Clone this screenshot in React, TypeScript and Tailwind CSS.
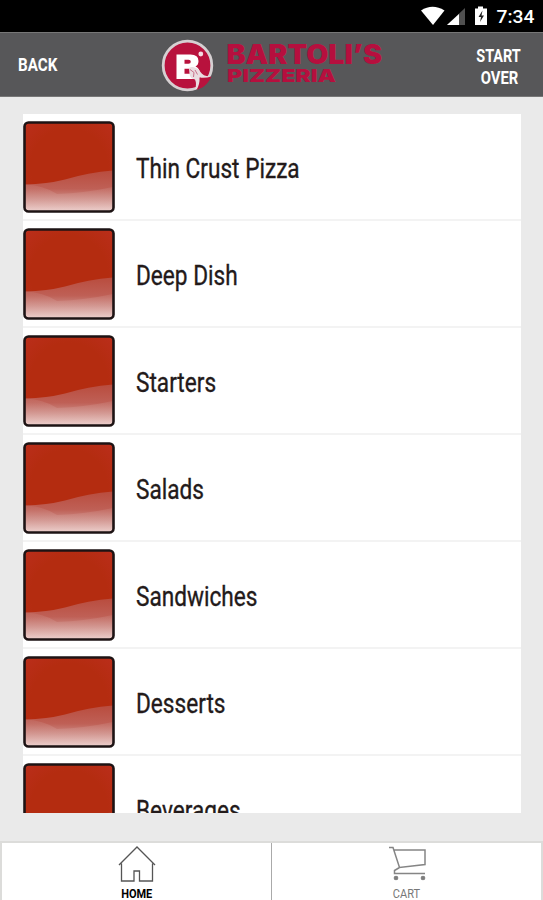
import React from 'react';

const categories = [
  'Thin Crust Pizza',
  'Deep Dish',
  'Starters',
  'Salads',
  'Sandwiches',
  'Desserts',
  'Beverages',
];

const StatusBar: React.FC = () => (
  <div className="flex h-8 shrink-0 items-center justify-end bg-black pr-[9px] text-white">
    <svg width="70" height="32" viewBox="0 0 70 32">
      <path d="M0 10.500Q11.500 3 23.500 10.500L12 25Z" fill="#fff" />
      <path d="M44 8V25H26Z" fill="#505050" />
      <path d="M38 14V25H26Z" fill="#fff" />
      <path d="M57 6.500h5v2h4V25H54V8.500h3Z" fill="#fff" />
      <path d="M61.500 10.500l-4 6.500h2.500l-1 5 4-6.500h-2.500Z" fill="#222" />
    </svg>
    <span className="ml-[7px] mt-px inline-block origin-right scale-x-[1.04] text-[18.500px] font-medium leading-8">7:34</span>
  </div>
);

const Logo: React.FC = () => (
  <svg width="224" height="56" viewBox="160 36 224 56" className="shrink-0">
    <circle cx="187.500" cy="64.500" r="24.300" fill="#b8123d" stroke="#d6d0d2" strokeWidth="2.800" />
    <path
      fillRule="evenodd"
      d="M176.500 53.500H190.500Q198.500 53.500 198.500 60Q198.500 64 195.500 65.500Q199.500 67 200 72Q198 78 192 78H176.500ZM184.500 58.800V62.800H188.500Q190.800 62.800 190.800 60.800Q190.800 58.800 188.500 58.800ZM184.500 67.800V72.800H189Q192 72.800 192 70.200Q192 67.800 189 67.800Z"
      fill="#fff"
    />
    <path d="M189 67Q192 65 196 67Q199 68 200.500 71Q203 75 209.500 75.500L207 78.500Q203 79 200 76.500Q201 84 198 87.500L195 88.500Q197 83 195 78.500Q190 77.500 189.500 73Z" fill="#eadde1" />
    <path d="M199.500 76.500Q205 77.500 211.500 75.500Q210 79 207 82.500Q203 87 196.500 89Q200 83 199.500 76.500Z" fill="#b8123d" />
    <path d="M190 68.500L194 71.500L193.500 76M195 69L197.500 73.500" fill="none" stroke="#c9718a" strokeWidth="1" />
    <circle cx="200.800" cy="53" r="2.400" fill="#f3dce3" />
    <text x="226.500" y="63.300" textLength="155.500" lengthAdjust="spacingAndGlyphs" fill="#b60f3e" className="font-['Inter'] text-[26.500px] font-black">
      BARTOLI’S
    </text>
    <text x="227" y="81" textLength="109" lengthAdjust="spacingAndGlyphs" fill="#b60f3e" className="font-['Inter'] text-[18px] font-black">
      PIZZERIA
    </text>
  </svg>
);

const Header: React.FC = () => (
  <header className="flex h-[65px] shrink-0 items-center border-t border-b border-t-[#777] border-b-[#777] bg-[#575759] text-[18.500px] font-bold text-white">
    <div className="w-[160px] shrink-0 pl-[18px] pt-[2px]">
      <span className="inline-block origin-left scale-x-[0.82]">BACK</span>
    </div>
    <Logo />
    <div className="flex flex-1 flex-col items-center pl-[71px] pt-[4px] leading-[22px]">
      <span className="scale-x-[0.78]">START</span>
      <span className="scale-x-[0.8]">OVER</span>
    </div>
  </header>
);

const Tile: React.FC = () => (
  <svg width="92" height="92" viewBox="0 0 92 92" className="shrink-0">
    <defs>
      <linearGradient id="shine" x1="0" y1="0" x2="0" y2="1">
        <stop offset="0" stopColor="#b94c3e" />
        <stop offset="0.450" stopColor="#bf6056" />
        <stop offset="0.700" stopColor="#cc8c86" />
        <stop offset="1" stopColor="#e9cbc8" />
      </linearGradient>
      <linearGradient id="glow" x1="0" y1="0" x2="0" y2="1">
        <stop offset="0" stopColor="#c4726a" />
        <stop offset="1" stopColor="#efd2cf" />
      </linearGradient>
      <radialGradient id="base" r="0.720">
        <stop offset="0.600" stopColor="#b42c10" />
        <stop offset="1" stopColor="#bb2e1c" />
      </radialGradient>
    </defs>
    <rect x="1.500" y="1.500" width="89" height="89" rx="4" fill="url(#base)" />
    <path d="M2 63.500Q24 63 42 58.500Q65 51.500 90 49.500V90H2Z" fill="url(#shine)" />
    <path d="M2 63.500Q20 64 34 73Q62 72 90 66V90H2Z" fill="url(#glow)" opacity="0.450" />
    <rect x="1.500" y="1.500" width="89" height="89" rx="4" fill="none" stroke="#1d1314" strokeWidth="2.600" />
  </svg>
);

const NavItem: React.FC<{ label: string; active?: boolean; children: React.ReactNode }> = ({
  label,
  active,
  children,
}) => (
  <div className="flex flex-1 flex-col items-center pt-[2px]">
    {children}
    <span
      className={
        active
          ? 'mt-[4px] scale-x-[0.88] text-[12.500px] font-bold leading-[16px] text-black'
          : 'mt-[4px] scale-x-[0.88] text-[12.500px] leading-[16px] text-[#777]'
      }
    >
      {label}
    </span>
  </div>
);

export default function App() {
  return (
    <div className="flex h-[900px] w-[543px] flex-col overflow-hidden bg-[#eaeaea] font-['Roboto',sans-serif]">
      <StatusBar />
      <Header />
      <main className="ml-[23px] mr-[22px] mt-[17px] h-[699px] shrink-0 overflow-hidden bg-white">
        <ul>
          {categories.map((name) => (
            <li key={name} className="flex h-[107px] items-start border-b-2 border-[#f3f3f3] pt-[6.500px]">
              <Tile />
              <span className="ml-[21px] mt-[2px] origin-left scale-x-[0.838] whitespace-nowrap text-[27px] leading-[92px] text-[#231a1a] [-webkit-text-stroke:0.35px_#231a1a]">
                {name}
              </span>
            </li>
          ))}
        </ul>
      </main>
      <nav className="mt-auto flex h-[59px] shrink-0 border-x-2 border-t-2 border-[#dcdcda] bg-white">
        <NavItem label="HOME" active>
          <svg width="38" height="37" viewBox="0 0 38 37" fill="none" stroke="#555" strokeWidth="1.300" className="shrink-0">
            <path d="M1 20L19 2L37 20M3.500 18.500V36H16V26H21.500V36H34.500V18.500" />
          </svg>
        </NavItem>
        <div className="w-px bg-[#aaa]" />
        <NavItem label="CART">
          <svg width="38" height="37" viewBox="0 0 38 37" fill="none" stroke="#858585" strokeWidth="1.500" className="shrink-0">
            <path d="M1 2.500H5L11.500 22.500L37 19.500V5H6M11.500 22.500L6.500 25.500V28.500H37" />
            <circle cx="8" cy="33" r="1.600" fill="#777" />
            <circle cx="35" cy="33" r="1.600" fill="#777" />
          </svg>
        </NavItem>
      </nav>
    </div>
  );
}
